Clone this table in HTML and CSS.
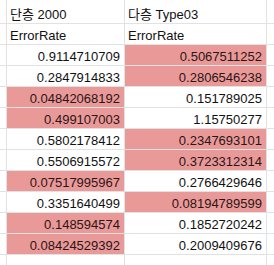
FILE: index.html
```html
<!DOCTYPE html>
<html lang="ko">
<head>
<meta charset="utf-8">
<link rel="stylesheet" href="styles.css">
</head>
<body>
<div class="sheet">
  <div class="c edge"></div><div class="c txt">단층 2000</div><div class="c txt">다층 Type03</div><div class="c edge"></div>
  <div class="c edge"></div><div class="c txt">ErrorRate</div><div class="c txt">ErrorRate</div><div class="c edge"></div>
  <div class="c edge"></div><div class="c num">0.9114710709</div><div class="c num hl">0.5067511252</div><div class="c edge"></div>
  <div class="c edge"></div><div class="c num">0.2847914833</div><div class="c num hl">0.2806546238</div><div class="c edge"></div>
  <div class="c edge"></div><div class="c num hl">0.04842068192</div><div class="c num">0.151789025</div><div class="c edge"></div>
  <div class="c edge"></div><div class="c num hl">0.499107003</div><div class="c num">1.15750277</div><div class="c edge"></div>
  <div class="c edge"></div><div class="c num">0.5802178412</div><div class="c num hl">0.2347693101</div><div class="c edge"></div>
  <div class="c edge"></div><div class="c num">0.5506915572</div><div class="c num hl">0.3723312314</div><div class="c edge"></div>
  <div class="c edge"></div><div class="c num hl">0.07517995967</div><div class="c num">0.2766429646</div><div class="c edge"></div>
  <div class="c edge"></div><div class="c num">0.3351640499</div><div class="c num hl">0.08194789599</div><div class="c edge"></div>
  <div class="c edge"></div><div class="c num hl">0.148594574</div><div class="c num">0.1852720242</div><div class="c edge"></div>
  <div class="c edge"></div><div class="c num hl">0.08424529392</div><div class="c num">0.2009409676</div><div class="c edge"></div>
  <div class="c edge"></div><div class="c"></div><div class="c"></div><div class="c edge"></div>
</div>
</body>
</html>
```

FILE: styles.css
```css
html, body {
  margin: 0;
  padding: 0;
  background: #ffffff;
  overflow: hidden;
}
.sheet {
  display: grid;
  grid-template-columns: 6px 117px 141px 1fr;
  grid-template-rows: 23px repeat(12, 20px);
  gap: 1px;
  background: #e2e2e2;
  width: 274px;
  font-family: "Liberation Sans", Arial, "Noto Sans CJK KR", sans-serif;
  font-size: 13px;
  color: #111111;
}
.c {
  background: #ffffff;
  display: flex;
  align-items: flex-end;
  line-height: 13px;
  padding: 0 3px 2px 3px;
  white-space: nowrap;
  overflow: hidden;
}
.edge {
  padding: 0;
}
.num {
  justify-content: flex-end;
  padding-right: 4px;
}
.hl {
  background: #ea9999;
  color: #2a1616;
}
```
